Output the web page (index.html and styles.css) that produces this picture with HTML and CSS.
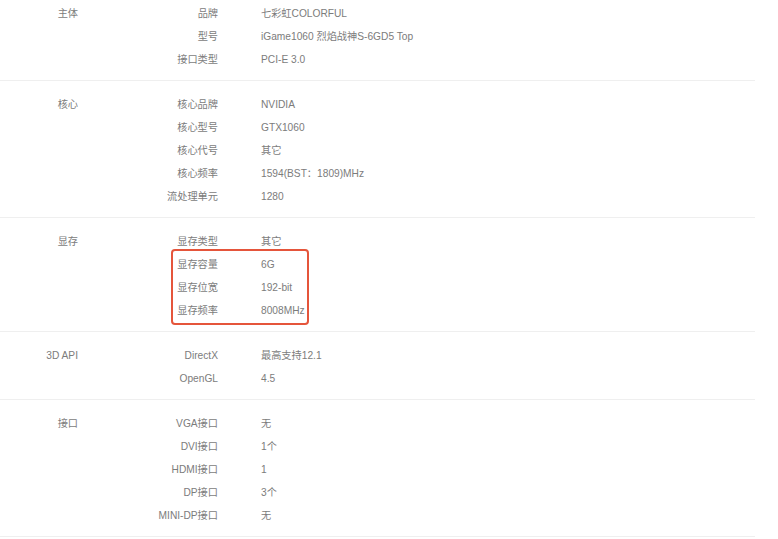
FILE: index.html
```html
<!DOCTYPE html>
<html lang="zh-CN">
<head>
    <meta charset="UTF-8">
    <title>七彩虹 iGame1060 烈焰战神S-6GD5 Top 参数</title>
    <link rel="stylesheet" href="styles.css">
</head>
<body>
    <div class="params">
        <div class="section first">
            <div class="group">主体</div>
            <div class="rows">
                <div class="row"><span class="key">品牌</span><span class="val">七彩虹COLORFUL</span></div>
                <div class="row"><span class="key">型号</span><span class="val">iGame1060 烈焰战神S-6GD5 Top</span></div>
                <div class="row"><span class="key">接口类型</span><span class="val">PCI-E 3.0</span></div>
            </div>
        </div>

        <div class="section">
            <div class="group">核心</div>
            <div class="rows">
                <div class="row"><span class="key">核心品牌</span><span class="val">NVIDIA</span></div>
                <div class="row"><span class="key">核心型号</span><span class="val">GTX1060</span></div>
                <div class="row"><span class="key">核心代号</span><span class="val">其它</span></div>
                <div class="row"><span class="key">核心频率</span><span class="val">1594(BST：1809)MHz</span></div>
                <div class="row"><span class="key">流处理单元</span><span class="val">1280</span></div>
            </div>
        </div>

        <div class="section">
            <div class="group">显存</div>
            <div class="rows">
                <div class="row"><span class="key">显存类型</span><span class="val">其它</span></div>
                <div class="mark">
                    <div class="row"><span class="key">显存容量</span><span class="val">6G</span></div>
                    <div class="row"><span class="key">显存位宽</span><span class="val">192-bit</span></div>
                    <div class="row"><span class="key">显存频率</span><span class="val">8008MHz</span></div>
                </div>
            </div>
        </div>

        <div class="section">
            <div class="group">3D API</div>
            <div class="rows">
                <div class="row"><span class="key">DirectX</span><span class="val">最高支持12.1</span></div>
                <div class="row"><span class="key">OpenGL</span><span class="val">4.5</span></div>
            </div>
        </div>

        <div class="section">
            <div class="group">接口</div>
            <div class="rows">
                <div class="row"><span class="key">VGA接口</span><span class="val">无</span></div>
                <div class="row"><span class="key">DVI接口</span><span class="val">1个</span></div>
                <div class="row"><span class="key">HDMI接口</span><span class="val">1</span></div>
                <div class="row"><span class="key">DP接口</span><span class="val">3个</span></div>
                <div class="row"><span class="key">MINI-DP接口</span><span class="val">无</span></div>
            </div>
        </div>
    </div>
</body>
</html>
```

FILE: styles.css
```css
body {
    margin: 0;
    background-color: #fff;
    font-family: "Liberation Sans", "Noto Sans CJK SC", sans-serif;
    font-size: 10.2px;
    color: #7c7c7c;
}
.params {
    width: 755px;
}
.section {
    display: flex;
    padding: 11px 0 10px;
    border-bottom: 1px solid #efefef;
}
.section.first {
    padding-top: 1px;
}
.group {
    width: 78px;
    padding-top: 1px;
    text-align: right;
    line-height: 23px;
    white-space: nowrap;
}
.rows {
    flex: 1;
}
.row {
    display: flex;
    height: 22px;
    padding-top: 1px;
    line-height: 23px;
    white-space: nowrap;
}
.key {
    width: 140px;
    text-align: right;
}
.val {
    padding-left: 43px;
}
.mark {
    position: relative;
}
.mark::after {
    content: "";
    position: absolute;
    left: 93px;
    top: -3px;
    bottom: -4px;
    width: 134px;
    border: 2px solid #e5553b;
    border-radius: 4px;
}
```
